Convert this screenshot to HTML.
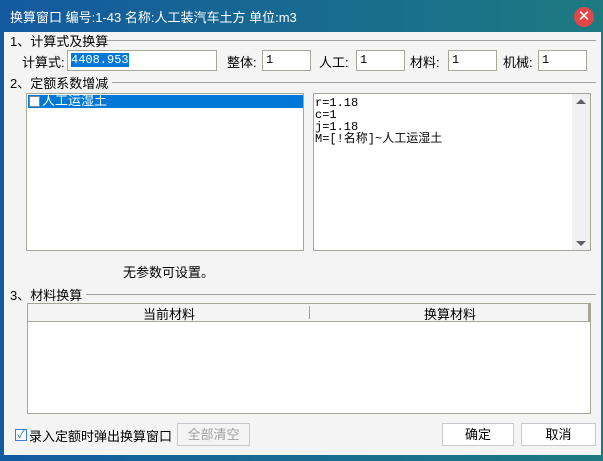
<!DOCTYPE html>
<html><head><meta charset="utf-8"><style>
*{margin:0;padding:0;box-sizing:border-box}
body{width:603px;height:461px;overflow:hidden;font-family:"Liberation Sans","Noto Sans CJK SC",sans-serif;font-size:12px;color:#000;position:relative;background:linear-gradient(90deg,#135aa0,#1c7a80)}
.a{position:absolute}
.body{left:4px;top:32px;width:597px;height:423px;background:#f4f4f4}
.title{left:10px;top:7px;color:#fff;font-size:13px}
.close{left:574px;top:7px;width:20px;height:20px;border-radius:50%;background:#e0474b;color:#fff;text-align:center;line-height:20px;font-size:15px}
.line{height:1px;background:#a0a0a0}
.inp{background:#fff;border:1px solid #a8a69a;height:21px;padding:2px 3px;font-family:"Liberation Mono","Noto Sans CJK SC",monospace;font-size:12px}
.lbl{font-size:13px}
.btn{border:1px solid #c8c8d0;background:#fff;text-align:center;line-height:21px;font-size:13px}
.mono{font-family:"Liberation Mono","Noto Sans CJK SC",monospace;font-size:12px;line-height:12px}
</style></head><body>
<div class="a title">换算窗口 编号:1-43 名称:人工装汽车土方 单位:m3</div>
<div class="a close">✕</div>
<div class="a body"></div>
<div class="a lbl" style="left:10px;top:31px">1、计算式及换算</div>
<div class="a line" style="left:106px;top:40px;width:490px"></div>
<div class="a lbl" style="left:22px;top:52px">计算式:</div>
<div class="a inp" style="left:67px;top:50px;width:150px"><span style="background:#0078d7;color:#fff">4408.953</span></div>
<div class="a lbl" style="left:227px;top:52px">整体:</div>
<div class="a inp" style="left:262px;top:50px;width:49px">1</div>
<div class="a lbl" style="left:319px;top:52px">人工:</div>
<div class="a inp" style="left:356px;top:50px;width:49px">1</div>
<div class="a lbl" style="left:410px;top:52px">材料:</div>
<div class="a inp" style="left:448px;top:50px;width:49px">1</div>
<div class="a lbl" style="left:503px;top:52px">机械:</div>
<div class="a inp" style="left:538px;top:50px;width:49px">1</div>
<div class="a lbl" style="left:10px;top:73px">2、定额系数增减</div>
<div class="a line" style="left:112px;top:82px;width:484px"></div>
<div class="a" style="left:26px;top:93px;width:278px;height:158px;background:#fff;border:1px solid #a8a69a"></div>
<div class="a" style="left:28px;top:95px;width:275px;height:13px;background:#0078d7"></div>
<div class="a" style="left:29px;top:96px;width:11px;height:11px;background:#fff;border:1px solid #888"></div>
<div class="a" style="left:42px;top:93px;color:#fff;font-size:13px;line-height:16px">人工运湿土</div>
<div class="a" style="left:313px;top:93px;width:278px;height:158px;background:#fff;border:1px solid #a8a69a"></div>
<div class="a" style="left:572px;top:94px;width:18px;height:156px;background:#f0f0f2"></div>
<div class="a" style="left:576px;top:99px;width:0;height:0;border-left:5px solid transparent;border-right:5px solid transparent;border-bottom:5px solid #606060"></div>
<div class="a" style="left:576px;top:241px;width:0;height:0;border-left:5px solid transparent;border-right:5px solid transparent;border-top:5px solid #606060"></div>
<div class="a mono" style="left:315px;top:97px">r=1.18<br>c=1<br>j=1.18<br>M=[!名称]~人工运湿土</div>
<div class="a lbl" style="left:123px;top:262px">无参数可设置。</div>
<div class="a lbl" style="left:10px;top:285px">3、材料换算</div>
<div class="a line" style="left:86px;top:294px;width:510px"></div>
<div class="a" style="left:27px;top:303px;width:564px;height:111px;background:#fff;border:1px solid #a8a69a"></div>
<div class="a" style="left:28px;top:304px;width:562px;height:18px;background:#f4f4f4;border-bottom:1px solid #a8a69a;border-right:2px solid #a8a69a"></div>
<div class="a" style="left:309px;top:306px;width:1px;height:13px;background:#a0a0a0"></div>
<div class="a lbl" style="left:143px;top:304px">当前材料</div>
<div class="a lbl" style="left:424px;top:304px">换算材料</div>
<div class="a" style="left:15px;top:429px;width:12px;height:12px;background:#fff;border:1px solid #3a7cd0;color:#2a6cc0;font-size:11px;line-height:10px;text-align:center">✓</div>
<div class="a lbl" style="left:29px;top:426px">录入定额时弹出换算窗口</div>
<div class="a btn" style="left:177px;top:423px;width:73px;height:23px;color:#a0a0a0;background:#f4f4f4">全部清空</div>
<div class="a btn" style="left:442px;top:423px;width:72px;height:23px">确定</div>
<div class="a btn" style="left:521px;top:423px;width:75px;height:23px">取消</div>
</body></html>
